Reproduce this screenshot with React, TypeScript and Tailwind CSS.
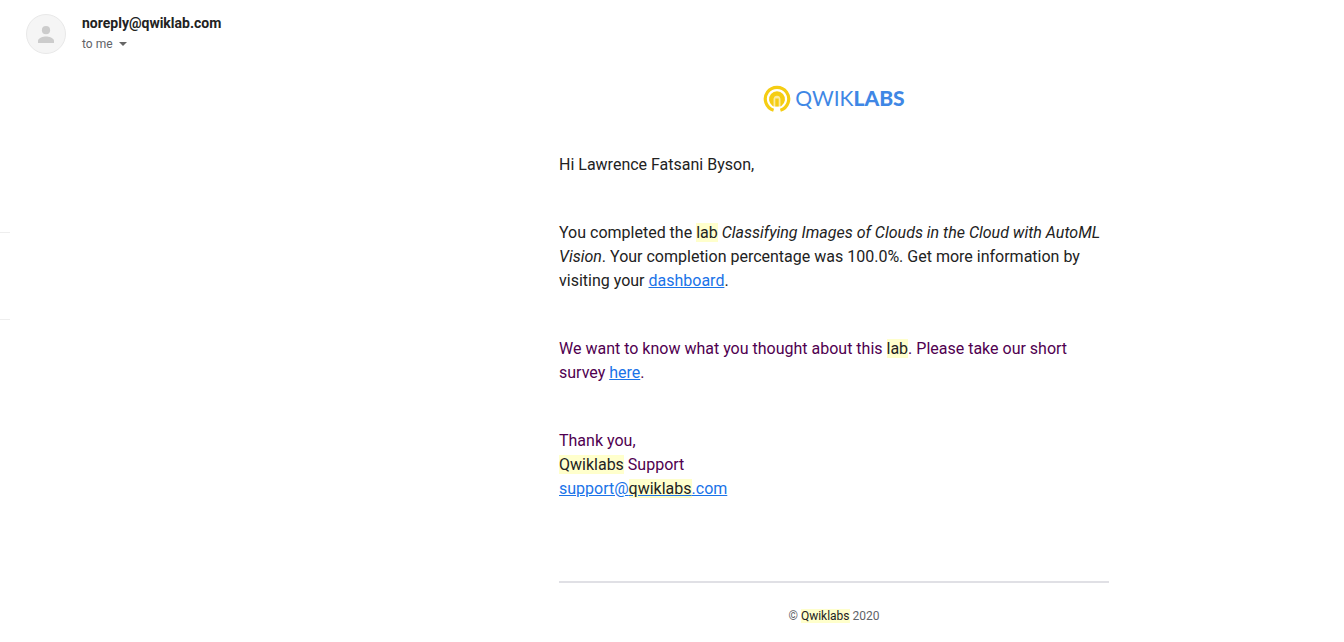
import type { ReactNode } from "react";

function Mark({ children }: { children: ReactNode }) {
  return <mark className="bg-[#ffffcc] text-[#222222]">{children}</mark>;
}

function Link({ href, children }: { href: string; children: ReactNode }) {
  return (
    <a href={href} className="text-[#1a73e8] underline">
      {children}
    </a>
  );
}

function Avatar() {
  return (
    <svg viewBox="0 0 40 40" className="size-10 shrink-0" role="img" aria-label="Sender">
      <circle cx="20" cy="20" r="19.5" fill="#f5f5f5" stroke="#e8e8e8" />
      <circle cx="20" cy="16.2" r="4.1" fill="#cccccc" />
      <path d="M12 29v-2.2c0-2.9 5.3-4.3 8-4.3s8 1.4 8 4.3V29z" fill="#cccccc" />
    </svg>
  );
}

function LogoMark() {
  return (
    <svg viewBox="0 0 28 28" className="size-7" aria-hidden="true">
      <path
        d="M10.6 25.2A11.7 11.7 0 1 1 17.4 25.2"
        fill="none"
        stroke="#f5cd13"
        strokeWidth="3.2"
      />
      <path d="M9.6 20.9A8 8 0 1 1 18.4 20.9L17.2 21.4V13.2H10.8V21.4z" fill="#f5cd13" />
      <path d="M10.8 14a3.2 3.2 0 0 1 6.4 0v7.6h-6.4z" fill="#fbeaa0" />
      <path d="M12.3 13.4h3.4V21.6h-3.4z" fill="#f5cd13" />
    </svg>
  );
}

function Logo() {
  return (
    <div className="flex h-7 items-start justify-center gap-1">
      <LogoMark />
      <span className="font-['Lato',sans-serif] text-[21px] leading-[26px] text-[#3f87e5]">
        <span className="font-normal">QWIK</span>
        <span className="font-black">LABS</span>
      </span>
    </div>
  );
}

export default function App() {
  return (
    <div className="flex min-h-screen bg-white font-['Roboto',sans-serif] text-[#222222]">
      <aside className="w-[10px] shrink-0 pt-[232px]">
        <div className="h-[88px] border-y border-[#eeeeee]" />
      </aside>
      <main className="min-w-0 flex-1">
        <header className="flex gap-4 pt-[14px] pl-4">
          <Avatar />
          <div>
            <h1 className="text-[14px] leading-[18px] font-bold">noreply@qwiklab.com</h1>
            <button
              type="button"
              className="flex items-center gap-[6px] pt-1 text-[12px] leading-4 text-[#5f6368]"
            >
              to me
              <svg viewBox="0 0 8 4" className="h-1 w-2" aria-hidden="true">
                <path d="M0 0h8L4 4z" fill="#666666" />
              </svg>
            </button>
          </div>
        </header>
        <div className="pt-[31px] lg:pl-[314px]">
          <article className="mx-auto max-w-[550px] text-[16px] leading-6">
            <Logo />
            <div className="flex flex-col gap-11 pt-10">
              <p>Hi Lawrence Fatsani Byson,</p>
              <p>
                You completed the <Mark>lab</Mark>{" "}
                <em>Classifying Images of Clouds in the Cloud with AutoML Vision</em>. Your
                completion percentage was 100.0%. Get more information by visiting your{" "}
                <Link href="#dashboard">dashboard</Link>.
              </p>
              <p className="text-[#500050]">
                We want to know what you thought about this <Mark>lab</Mark>. Please take our short
                survey <Link href="#survey">here</Link>.
              </p>
              <p className="text-[#500050]">
                Thank you,
                <br />
                <Mark>Qwiklabs</Mark> Support
                <br />
                <Link href="mailto:support@qwiklabs.com">
                  support@<Mark>qwiklabs</Mark>.com
                </Link>
              </p>
            </div>
            <footer className="mt-20 border-t-2 border-[#e0e0e5] pt-6 text-center text-[12px] leading-[18px] text-[#5f6368]">
              © <Mark>Qwiklabs</Mark> 2020
            </footer>
          </article>
        </div>
      </main>
    </div>
  );
}
